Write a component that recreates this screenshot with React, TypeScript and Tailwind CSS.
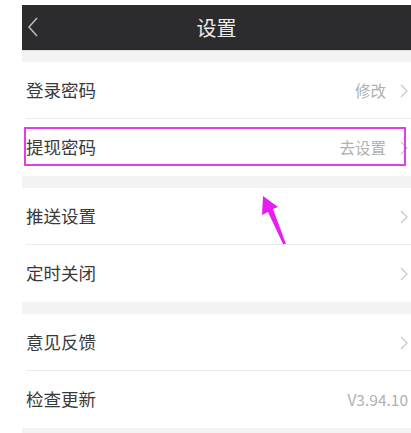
import React from 'react';

type Row = { label: string; value?: string; chevron?: boolean; highlight?: boolean };

const groups: Row[][] = [
  [
    { label: '登录密码', value: '修改', chevron: true },
    { label: '提现密码', value: '去设置', chevron: true, highlight: true },
  ],
  [
    { label: '推送设置', chevron: true },
    { label: '定时关闭', chevron: true },
  ],
  [
    { label: '意见反馈', chevron: true },
    { label: '检查更新', value: 'V3.94.10' },
  ],
];

function Chevron({ className }: { className?: string }) {
  return (
    <svg width="8" height="14" viewBox="0 0 8 14" className={className}>
      <polyline points="1,1 7,7 1,13" fill="none" stroke="currentColor" strokeWidth="1.1" />
    </svg>
  );
}

function SettingRow({ row, last }: { row: Row; last: boolean }) {
  return (
    <div className="relative h-[57px] bg-white">
      <div className="flex h-full items-center justify-between pl-[4px] pr-[3px]">
        <span className="text-[17.5px] text-[#3a3a3a]">{row.label}</span>
        <div className="flex items-center gap-[14px]">
          {row.value && <span className="text-[15.5px] text-[#b0b0b0]">{row.value}</span>}
          {row.chevron && <Chevron className="text-[#c4c4c4]" />}
        </div>
      </div>
      {!last && <div className="absolute bottom-0 left-[4px] right-0 h-px bg-[#ebebeb]" />}
      {row.highlight && (
        <div className="absolute left-[2px] right-[5px] top-[8px] bottom-[10px] border-2 border-[#e23ee6]" />
      )}
    </div>
  );
}

export default function App() {
  return (
    <div
      className="relative h-[433px] w-[411px] overflow-hidden bg-white pl-[22px] pt-[5px]"
      style={{ fontFamily: '"Noto Sans CJK SC", "Noto Sans", sans-serif' }}
    >
      <div className="bg-[#f3f3f4]">
        <div className="relative flex h-[45px] items-center justify-center bg-[#2c2c2f]">
          <svg width="12" height="20" viewBox="0 0 12 20" className="absolute left-[5px] top-[12px] text-[#bdbdbd]">
            <polyline points="10,1 2,10 10,19" fill="none" stroke="currentColor" strokeWidth="1.5" />
          </svg>
          <span className="text-[20px] text-[#ececec]">设置</span>
        </div>
        <div className="h-px bg-[#dedede]" />
        {groups.map((g, gi) => (
          <div key={gi} className={gi === 0 ? 'pt-[11px]' : 'pt-[12px]'}>
            {g.map((row, ri) => (
              <SettingRow key={row.label} row={row} last={ri === g.length - 1} />
            ))}
          </div>
        ))}
        <div className="h-[12px]" />
      </div>
      <svg className="pointer-events-none absolute left-0 top-0" width="411" height="433">
        <polygon
          points="263,196 278,207 273,209 286,244 283,244 268,212 262,215"
          fill="#e61ef0"
        />
      </svg>
    </div>
  );
}
